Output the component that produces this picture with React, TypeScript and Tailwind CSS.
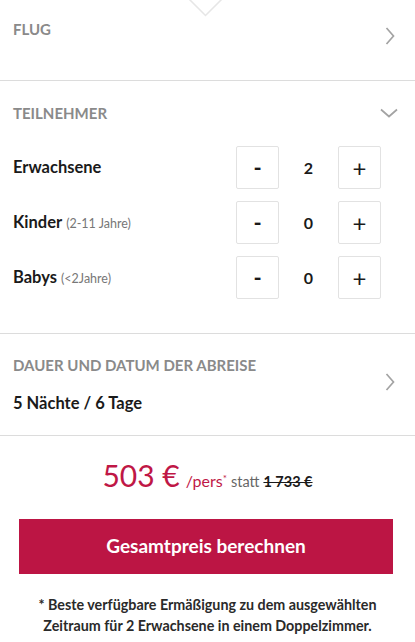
import React, { useState } from "react"

const font = { fontFamily: "Lato, 'Open Sans', sans-serif" }

const ChevronRight = () => (
  <svg width="10" height="18" viewBox="0 0 10 18" fill="none">
    <path d="M1.5 1 L8.5 9 L1.5 17" stroke="#a3a3a3" strokeWidth="1.7" />
  </svg>
)

const ChevronDown = () => (
  <svg width="18" height="10" viewBox="0 0 18 10" fill="none">
    <path d="M1 1.5 L9 8.5 L17 1.5" stroke="#a3a3a3" strokeWidth="1.7" />
  </svg>
)

interface Traveller {
  label: string
  hint?: string
  count: number
}

const Counter: React.FC<{ value: number; onChange: (v: number) => void }> = ({ value, onChange }) => (
  <div className="flex items-center">
    <button
      onClick={() => onChange(Math.max(0, value - 1))}
      className="w-[43px] h-[43px] flex items-center justify-center border border-[#e2e2e2] rounded-[2px] text-[22px] font-bold text-[#1a1a1a] bg-white"
    >
      -
    </button>
    <span className="w-[59px] text-center text-[16px] font-bold text-[#1a1a1a]">{value}</span>
    <button
      onClick={() => onChange(value + 1)}
      className="w-[43px] h-[43px] flex items-center justify-center border border-[#e2e2e2] rounded-[2px] text-[24px] font-normal text-[#1a1a1a] bg-white"
    >
      +
    </button>
  </div>
)

export default function App() {
  const [travellers, setTravellers] = useState<Traveller[]>([
    { label: "Erwachsene", count: 2 },
    { label: "Kinder", hint: "(2-11 Jahre)", count: 0 },
    { label: "Babys", hint: "(<2Jahre)", count: 0 },
  ])

  const update = (i: number, v: number) =>
    setTravellers((t) => t.map((x, j) => (j === i ? { ...x, count: v } : x)))

  return (
    <div className="w-[415px] min-h-[642px] bg-white relative overflow-hidden" style={font}>
      {/* notch from the panel above */}
      <svg className="absolute left-[188px] top-0" width="35" height="18" viewBox="0 0 35 18" fill="none">
        <path d="M1 -1 L17.5 15.5 L34 -1" stroke="#e6e6e6" strokeWidth="1.5" />
      </svg>

      {/* Flug */}
      <div className="h-[81px] flex justify-between items-start pl-[13px] pr-[20px] border-b border-[#dcdcdc]">
        <span className="pt-[19px] text-[15px] leading-[20px] font-bold text-[#8a8a8a] uppercase">Flug</span>
        <span className="pt-[27px]">
          <ChevronRight />
        </span>
      </div>

      {/* Teilnehmer */}
      <div className="pl-[13px] pr-[34px] pt-[22px] pb-[34px] border-b border-[#dcdcdc]">
        <div className="flex justify-between items-center -mr-[17px]">
          <span className="text-[15px] leading-[20px] font-bold text-[#8a8a8a] uppercase">Teilnehmer</span>
          <ChevronDown />
        </div>
        <div className="flex flex-col gap-[12px] mt-[23px]">
          {travellers.map((t, i) => (
            <div key={t.label} className="flex items-center justify-between">
              <span className="text-[16.5px] font-bold text-[#1a1a1a]">
                {t.label}
                {t.hint && <span className="ml-[4px] text-[12.5px] font-normal text-[#777]">{t.hint}</span>}
              </span>
              <Counter value={t.count} onChange={(v) => update(i, v)} />
            </div>
          ))}
        </div>
      </div>

      {/* Dauer */}
      <div className="flex justify-between items-center pl-[13px] pr-[20px] pt-[21px] pb-[20px] border-b border-[#dcdcdc]">
        <div className="flex flex-col gap-[16px]">
          <span className="text-[15px] leading-[20px] font-bold text-[#8a8a8a] uppercase">Dauer und Datum der Abreise</span>
          <span className="text-[16.5px] leading-[24px] font-bold text-[#1a1a1a]">5 Nächte / 6 Tage</span>
        </div>
        <span className="-mt-[6px]">
          <ChevronRight />
        </span>
      </div>

      {/* Preis */}
      <div className="flex items-baseline justify-center pt-[23px]">
        <span className="text-[30px] leading-[32px] font-normal text-[#bf1746]">503 €</span>
        <span className="ml-[6px] text-[16px] text-[#bf1746]">
          /pers<sup className="text-[10px]">*</sup>
        </span>
        <span className="ml-[4px] text-[14.5px] text-[#666]">statt</span>
        <span className="ml-[4px] text-[14.5px] font-bold text-[#1a1a1a] line-through">1 733 €</span>
      </div>

      <button className="mt-[26px] ml-[19px] w-[374px] h-[55px] bg-[#bc1544] text-white text-[19px] font-bold">
        Gesamtpreis berechnen
      </button>

      <p className="mt-[20px] px-[32px] text-center text-[14.3px] leading-[21px] font-bold text-[#2a2a2a]">
        * Beste verfügbare Ermäßigung zu dem ausgewählten Zeitraum für 2 Erwachsene in einem Doppelzimmer.
      </p>
    </div>
  )
}
